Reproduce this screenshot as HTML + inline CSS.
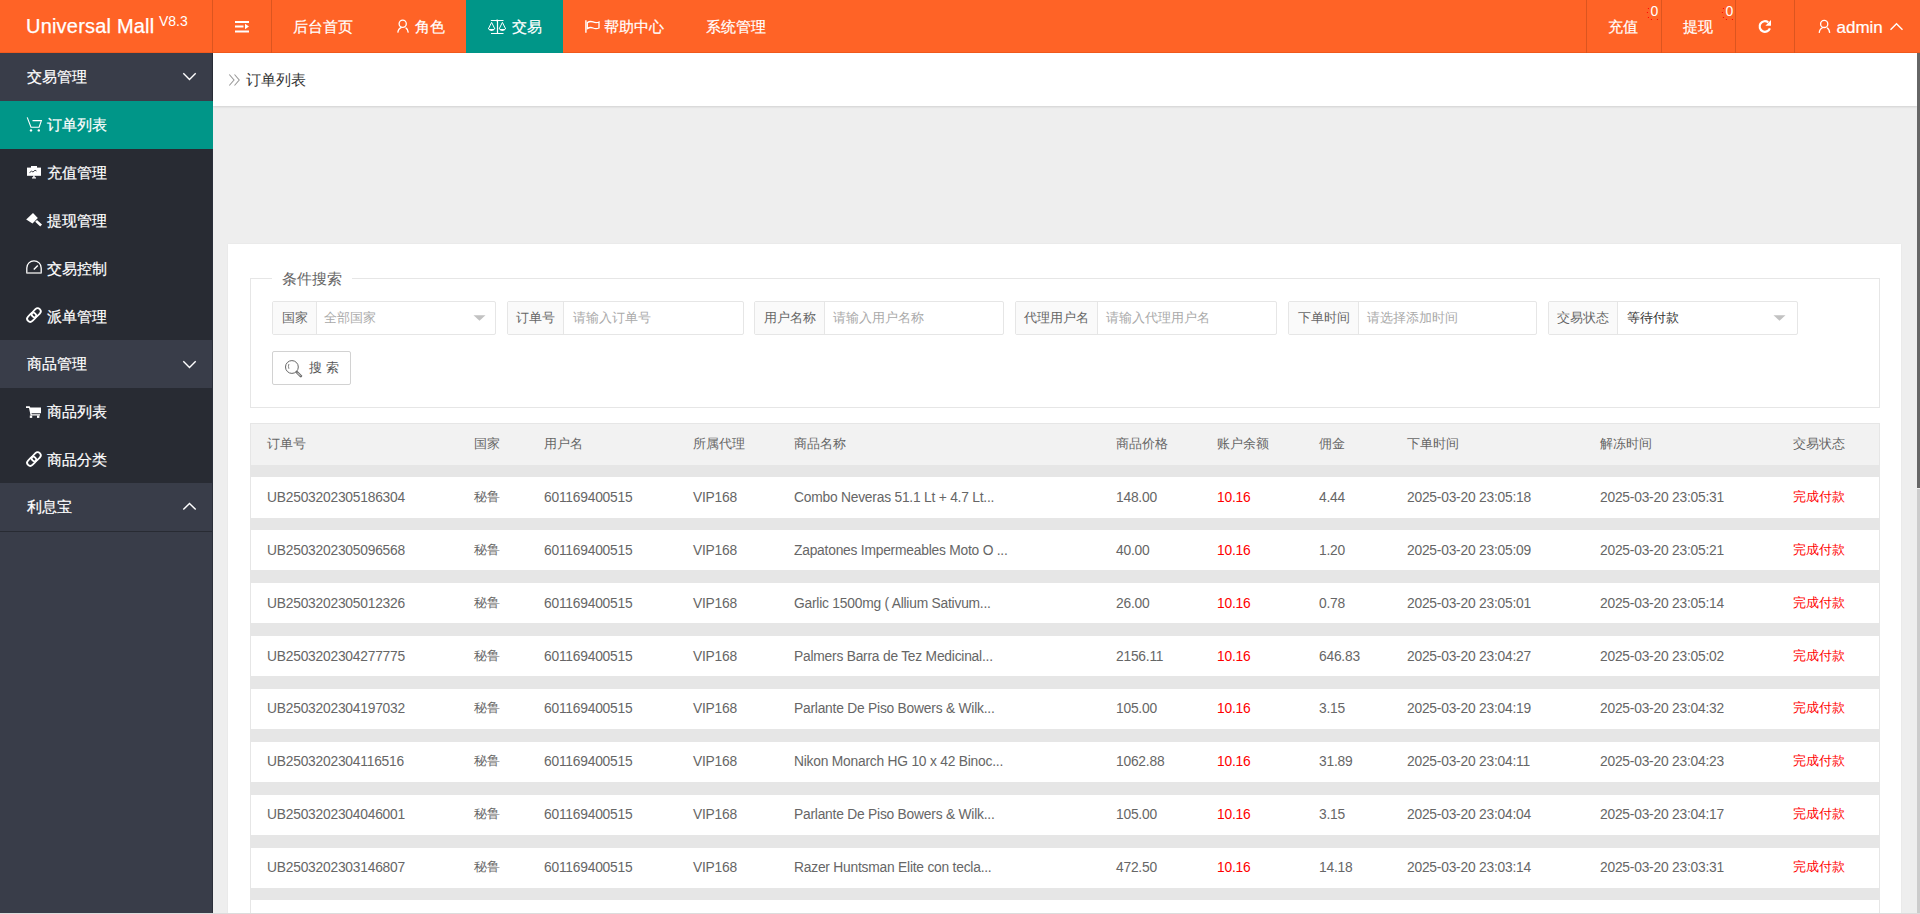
<!DOCTYPE html>
<html><head><meta charset="utf-8">
<style>
*{box-sizing:border-box;margin:0;padding:0}
html,body{width:1920px;height:914px;overflow:hidden;background:#eeeeee;font-family:"Liberation Sans",sans-serif;}
.abs{position:absolute;white-space:nowrap}
#hdr{position:absolute;left:0;top:0;width:1920px;height:53px;background:#ff6326;border-bottom:1px solid #f25a1d}
.sep{position:absolute;top:0;width:1px;height:53px;background:#dc551f}
.hn{position:absolute;top:1px;height:52px;line-height:52px;color:#fff;font-size:15px;-webkit-text-stroke:0.2px #fff}
#side{position:absolute;left:0;top:53px;width:213px;height:861px;background:#393d49;border-right:1px solid #2b2f3a}
.grp{position:absolute;left:0;width:212px;height:48px;background:#393d49}
.kids{position:absolute;left:0;width:212px;background:#282b33}
.st{position:absolute;color:#fff;font-size:15px;line-height:20px;-webkit-text-stroke:0.2px #fff}
#crumb{position:absolute;left:213px;top:53px;width:1704px;height:53px;background:#fff;box-shadow:0 1px 2px rgba(0,0,0,.12)}
#card{position:absolute;left:228px;top:244px;width:1673px;height:680px;background:#fff;box-shadow:0 0 2px rgba(0,0,0,.05)}
.fs{position:absolute;left:250px;top:278px;width:1630px;height:130px;border:1px solid #e6e6e6}
.ig{position:absolute;top:301px;height:34px;border:1px solid #e6e6e6;border-radius:2px;background:#fff}
.ig .lb{position:absolute;left:0;top:0;height:32px;line-height:32px;background:#fafafa;border-right:1px solid #e6e6e6;color:#666;font-size:13px;text-align:center}
.ig .ph{position:absolute;top:0;height:32px;line-height:32px;color:#aaa;font-size:13px}
#tbl{position:absolute;left:250px;top:423px;width:1630px;height:500px;border:1px solid #e6e6e6;border-bottom:none;background:#e6e6e6}
.th{position:absolute;left:251px;top:424px;width:1628px;height:41px;background:#f2f2f2}
.tr{position:absolute;left:251px;width:1628px;height:41px;background:#fff}
.c{position:absolute;font-size:13.8px;letter-spacing:-0.22px;color:#666;white-space:nowrap;line-height:20px}
.cj{font-size:13px;letter-spacing:0}
.red{color:#ff0000}
</style></head><body>
<div id="hdr">
  <div class="abs" style="left:26px;top:13.5px;color:#fff;font-size:20px;line-height:24px;letter-spacing:0.2px;-webkit-text-stroke:0.25px #fff">Universal Mall</div>
  <div class="abs" style="left:159px;top:11px;color:#fff;font-size:14px;line-height:20px">V8.3</div>
  <div class="sep" style="left:212px"></div>
  <div class="sep" style="left:271px"></div>
  <div class="hn" style="left:293px">后台首页</div>
  <div class="hn" style="left:415px">角色</div>
  <div class="abs" style="left:466px;top:0;width:97px;height:53px;background:#009688"></div>
  <div class="hn" style="left:512px">交易</div>
  <div class="hn" style="left:604px">帮助中心</div>
  <div class="hn" style="left:706px">系统管理</div>
  <div class="sep" style="left:1586px"></div>
  <div class="sep" style="left:1661px"></div>
  <div class="sep" style="left:1735px"></div>
  <div class="sep" style="left:1794px"></div>
  <div class="hn" style="left:1608px;top:1px">充值</div>
  <div class="abs" style="left:1650.5px;top:3px;color:#fff;font-size:14px;line-height:16px">0</div>
  <div class="hn" style="left:1683px;top:1px">提现</div>
  <div class="abs" style="left:1725.5px;top:3px;color:#fff;font-size:14px;line-height:16px">0</div>
  <div class="hn" style="left:1836.5px;top:1.5px;font-size:17px">admin</div>
</div>

<div id="side">
  <div class="grp" style="top:0"></div>
  <div class="kids" style="top:48px;height:239px"></div>
  <div class="abs" style="left:0;top:48px;width:213px;height:48px;background:#009688"></div>
  <div class="grp" style="top:287px"></div>
  <div class="kids" style="top:335px;height:95px"></div>
  <div class="grp" style="top:430px;border-bottom:1px solid #282b33;height:49px"></div>
  <div class="st" style="left:27px;top:14px">交易管理</div>
  <div class="st" style="left:47px;top:62px">订单列表</div>
  <div class="st" style="left:47px;top:110px">充值管理</div>
  <div class="st" style="left:47px;top:158px">提现管理</div>
  <div class="st" style="left:47px;top:206px">交易控制</div>
  <div class="st" style="left:47px;top:254px">派单管理</div>
  <div class="st" style="left:27px;top:301px">商品管理</div>
  <div class="st" style="left:47px;top:349px">商品列表</div>
  <div class="st" style="left:47px;top:397px">商品分类</div>
  <div class="st" style="left:27px;top:444px">利息宝</div>
</div>

<div id="crumb">
  <div class="abs" style="left:33px;top:17px;font-size:15px;color:#333;line-height:20px">订单列表</div>
</div>

<div id="card"></div>
<div class="fs"></div>
<div class="abs" style="left:272px;top:269px;padding:0 10px;background:#fff;font-size:15px;color:#666;line-height:20px">条件搜索</div>

<div class="ig" style="left:272px;width:224px"><div class="lb" style="width:44px">国家</div><div class="ph" style="left:51px">全部国家</div></div>
<div class="ig" style="left:507px;width:237px"><div class="lb" style="width:56px">订单号</div><div class="ph" style="left:65px">请输入订单号</div></div>
<div class="ig" style="left:754px;width:250px"><div class="lb" style="width:70px">用户名称</div><div class="ph" style="left:78px">请输入用户名称</div></div>
<div class="ig" style="left:1015px;width:262px"><div class="lb" style="width:82px">代理用户名</div><div class="ph" style="left:90px">请输入代理用户名</div></div>
<div class="ig" style="left:1288px;width:249px"><div class="lb" style="width:70px">下单时间</div><div class="ph" style="left:78px">请选择添加时间</div></div>
<div class="ig" style="left:1548px;width:250px"><div class="lb" style="width:69px">交易状态</div><div class="ph" style="left:78px;color:#333">等待付款</div></div>

<div class="abs" style="left:272px;top:351px;width:79px;height:34px;border:1px solid #d2d2d2;border-radius:2px;background:#fff"></div>
<div class="abs" style="left:309px;top:359px;font-size:13px;color:#555;letter-spacing:4px;line-height:18px">搜索</div>

<div id="tbl"></div>
<div class="th"></div>
<!--ROWS-->
<div class="c cj" style="left:267px;top:434px">订单号</div>
<div class="c cj" style="left:474px;top:434px">国家</div>
<div class="c cj" style="left:544px;top:434px">用户名</div>
<div class="c cj" style="left:693px;top:434px">所属代理</div>
<div class="c cj" style="left:794px;top:434px">商品名称</div>
<div class="c cj" style="left:1116px;top:434px">商品价格</div>
<div class="c cj" style="left:1217px;top:434px">账户余额</div>
<div class="c cj" style="left:1319px;top:434px">佣金</div>
<div class="c cj" style="left:1407px;top:434px">下单时间</div>
<div class="c cj" style="left:1600px;top:434px">解冻时间</div>
<div class="c cj" style="left:1793px;top:434px">交易状态</div>
<div class="tr" style="top:477px;height:41px"></div>
<div class="c" style="left:267px;top:488px">UB2503202305186304</div>
<div class="c cj" style="left:474px;top:487px">秘鲁</div>
<div class="c" style="left:544px;top:488px">601169400515</div>
<div class="c" style="left:693px;top:488px">VIP168</div>
<div class="c" style="left:794px;top:488px">Combo Neveras 51.1 Lt + 4.7 Lt...</div>
<div class="c" style="left:1116px;top:488px">148.00</div>
<div class="c red" style="left:1217px;top:488px">10.16</div>
<div class="c" style="left:1319px;top:488px">4.44</div>
<div class="c" style="left:1407px;top:488px">2025-03-20 23:05:18</div>
<div class="c" style="left:1600px;top:488px">2025-03-20 23:05:31</div>
<div class="c cj red" style="left:1793px;top:487px">完成付款</div>
<div class="tr" style="top:530px;height:40px"></div>
<div class="c" style="left:267px;top:541px">UB2503202305096568</div>
<div class="c cj" style="left:474px;top:540px">秘鲁</div>
<div class="c" style="left:544px;top:541px">601169400515</div>
<div class="c" style="left:693px;top:541px">VIP168</div>
<div class="c" style="left:794px;top:541px">Zapatones Impermeables Moto O ...</div>
<div class="c" style="left:1116px;top:541px">40.00</div>
<div class="c red" style="left:1217px;top:541px">10.16</div>
<div class="c" style="left:1319px;top:541px">1.20</div>
<div class="c" style="left:1407px;top:541px">2025-03-20 23:05:09</div>
<div class="c" style="left:1600px;top:541px">2025-03-20 23:05:21</div>
<div class="c cj red" style="left:1793px;top:540px">完成付款</div>
<div class="tr" style="top:583px;height:40px"></div>
<div class="c" style="left:267px;top:594px">UB2503202305012326</div>
<div class="c cj" style="left:474px;top:593px">秘鲁</div>
<div class="c" style="left:544px;top:594px">601169400515</div>
<div class="c" style="left:693px;top:594px">VIP168</div>
<div class="c" style="left:794px;top:594px">Garlic 1500mg ( Allium Sativum...</div>
<div class="c" style="left:1116px;top:594px">26.00</div>
<div class="c red" style="left:1217px;top:594px">10.16</div>
<div class="c" style="left:1319px;top:594px">0.78</div>
<div class="c" style="left:1407px;top:594px">2025-03-20 23:05:01</div>
<div class="c" style="left:1600px;top:594px">2025-03-20 23:05:14</div>
<div class="c cj red" style="left:1793px;top:593px">完成付款</div>
<div class="tr" style="top:636px;height:40px"></div>
<div class="c" style="left:267px;top:647px">UB2503202304277775</div>
<div class="c cj" style="left:474px;top:646px">秘鲁</div>
<div class="c" style="left:544px;top:647px">601169400515</div>
<div class="c" style="left:693px;top:647px">VIP168</div>
<div class="c" style="left:794px;top:647px">Palmers Barra de Tez Medicinal...</div>
<div class="c" style="left:1116px;top:647px">2156.11</div>
<div class="c red" style="left:1217px;top:647px">10.16</div>
<div class="c" style="left:1319px;top:647px">646.83</div>
<div class="c" style="left:1407px;top:647px">2025-03-20 23:04:27</div>
<div class="c" style="left:1600px;top:647px">2025-03-20 23:05:02</div>
<div class="c cj red" style="left:1793px;top:646px">完成付款</div>
<div class="tr" style="top:689px;height:40px"></div>
<div class="c" style="left:267px;top:699px">UB2503202304197032</div>
<div class="c cj" style="left:474px;top:698px">秘鲁</div>
<div class="c" style="left:544px;top:699px">601169400515</div>
<div class="c" style="left:693px;top:699px">VIP168</div>
<div class="c" style="left:794px;top:699px">Parlante De Piso Bowers &amp; Wilk...</div>
<div class="c" style="left:1116px;top:699px">105.00</div>
<div class="c red" style="left:1217px;top:699px">10.16</div>
<div class="c" style="left:1319px;top:699px">3.15</div>
<div class="c" style="left:1407px;top:699px">2025-03-20 23:04:19</div>
<div class="c" style="left:1600px;top:699px">2025-03-20 23:04:32</div>
<div class="c cj red" style="left:1793px;top:698px">完成付款</div>
<div class="tr" style="top:742px;height:40px"></div>
<div class="c" style="left:267px;top:752px">UB2503202304116516</div>
<div class="c cj" style="left:474px;top:751px">秘鲁</div>
<div class="c" style="left:544px;top:752px">601169400515</div>
<div class="c" style="left:693px;top:752px">VIP168</div>
<div class="c" style="left:794px;top:752px">Nikon Monarch HG 10 x 42 Binoc...</div>
<div class="c" style="left:1116px;top:752px">1062.88</div>
<div class="c red" style="left:1217px;top:752px">10.16</div>
<div class="c" style="left:1319px;top:752px">31.89</div>
<div class="c" style="left:1407px;top:752px">2025-03-20 23:04:11</div>
<div class="c" style="left:1600px;top:752px">2025-03-20 23:04:23</div>
<div class="c cj red" style="left:1793px;top:751px">完成付款</div>
<div class="tr" style="top:795px;height:40px"></div>
<div class="c" style="left:267px;top:805px">UB2503202304046001</div>
<div class="c cj" style="left:474px;top:804px">秘鲁</div>
<div class="c" style="left:544px;top:805px">601169400515</div>
<div class="c" style="left:693px;top:805px">VIP168</div>
<div class="c" style="left:794px;top:805px">Parlante De Piso Bowers &amp; Wilk...</div>
<div class="c" style="left:1116px;top:805px">105.00</div>
<div class="c red" style="left:1217px;top:805px">10.16</div>
<div class="c" style="left:1319px;top:805px">3.15</div>
<div class="c" style="left:1407px;top:805px">2025-03-20 23:04:04</div>
<div class="c" style="left:1600px;top:805px">2025-03-20 23:04:17</div>
<div class="c cj red" style="left:1793px;top:804px">完成付款</div>
<div class="tr" style="top:848px;height:40px"></div>
<div class="c" style="left:267px;top:858px">UB2503202303146807</div>
<div class="c cj" style="left:474px;top:857px">秘鲁</div>
<div class="c" style="left:544px;top:858px">601169400515</div>
<div class="c" style="left:693px;top:858px">VIP168</div>
<div class="c" style="left:794px;top:858px">Razer Huntsman Elite con tecla...</div>
<div class="c" style="left:1116px;top:858px">472.50</div>
<div class="c red" style="left:1217px;top:858px">10.16</div>
<div class="c" style="left:1319px;top:858px">14.18</div>
<div class="c" style="left:1407px;top:858px">2025-03-20 23:03:14</div>
<div class="c" style="left:1600px;top:858px">2025-03-20 23:03:31</div>
<div class="c cj red" style="left:1793px;top:857px">完成付款</div>
<div class="tr" style="top:900px;height:13px"></div>
<!--/ROWS-->
<div class="abs" style="left:1917px;top:53px;width:3px;height:435px;background:#666"></div>
<div class="abs" style="left:1917px;top:489px;width:3px;height:425px;background:#ccc"></div>
<div class="abs" style="left:0;top:913px;width:1920px;height:1px;background:#dcdcdc"></div>
<svg id="icons" style="position:absolute;left:0;top:0;pointer-events:none" width="1920" height="914" viewBox="0 0 1920 914">
<g fill="#fff">
 <rect x="1647.9" y="8.0" width="1" height="1" fill="#f00"/><rect x="1646.9" y="12.0" width="1" height="1" fill="#f00"/><rect x="1647.9" y="17.0" width="1" height="1" fill="#f00"/><rect x="1650.9" y="19.0" width="1" height="1" fill="#f00"/><rect x="1656.9" y="19.0" width="1" height="1" fill="#f00"/><rect x="1722.9" y="8.0" width="1" height="1" fill="#f00"/><rect x="1721.9" y="12.0" width="1" height="1" fill="#f00"/><rect x="1722.9" y="17.0" width="1" height="1" fill="#f00"/><rect x="1725.9" y="19.0" width="1" height="1" fill="#f00"/><rect x="1731.9" y="19.0" width="1" height="1" fill="#f00"/>
 <!-- hamburger -->
 <rect x="235" y="21" width="14" height="2"/>
 <rect x="235" y="25.5" width="8.5" height="2"/>
 <polygon points="245,23.8 249,26.5 245,29.2"/>
 <rect x="235" y="30.5" width="14" height="2"/>
</g>
<g fill="none" stroke="#fff" stroke-width="1.3">
 <!-- role user -->
 <circle cx="402.7" cy="23.7" r="3.6"/>
 <path d="M397.8 32.6 Q398.3 28.3 401.6 27.3"/>
 <path d="M405.6 27.6 Q407.8 28.8 408.3 32.6"/>
 <!-- admin user -->
 <circle cx="1824.2" cy="23.9" r="3.6"/>
 <path d="M1819.2 32.8 Q1819.7 28.5 1823 27.5"/>
 <path d="M1827 27.8 Q1829.2 29 1829.7 32.8"/>
 <!-- scales -->
 <path d="M490.8 20.5 H503.5 M497.5 20.5 V33.3 M491 33.5 H503.5" stroke-width="1.2"/>
 <path d="M491.6 22.4 L488.3 29 M491.6 22.4 L494.9 29 M502.4 22.4 L499.1 29 M502.4 22.4 L505.7 29" stroke-width="1"/>
 <!-- flag -->
 <path d="M585.9 20.3 V32.8" stroke-width="1.4"/>
 <path d="M587.3 22.6 Q590 20.8 593 21.9 Q596 23.2 599 22 V28 Q596 29.3 593 28 Q590 26.8 587.3 28.6 Z" stroke-width="1.3"/>
 <!-- refresh -->
 <path d="M1768.2 22.3 A5.3 5.3 0 1 0 1769.9 28.3" stroke-width="2.2"/>
 <!-- caret up header -->
 <polyline points="1890.5,29.8 1896.5,23.8 1902.5,29.8" stroke-width="1.4"/>
 <!-- sidebar chevrons -->
 <polyline points="183.3,73.2 189.5,79.4 195.7,73.2" stroke-width="1.4"/>
 <polyline points="183.3,361.2 189.5,367.4 195.7,361.2" stroke-width="1.4"/>
 <polyline points="183.3,509.6 189.5,503.4 195.7,509.6" stroke-width="1.4"/>
 <!-- cart outline -->
 <path d="M27.2 117.4 L31 127.3 H39.1 L41.4 120.6 H32.5" stroke-width="1.1"/>
</g>
<g fill="#fff">
 <polygon points="1765.4,25.8 1771,25.8 1771,20"/>
 <path d="M488.3 29 H494.9 Q493.8 31 491.6 31 Q489.4 31 488.3 29 Z"/>
 <path d="M499.1 29 H505.7 Q504.6 31 502.4 31 Q500.2 31 499.1 29 Z"/>
 <circle cx="497.2" cy="20.5" r="1.1"/>
 <circle cx="31" cy="130.4" r="1.2"/>
 <circle cx="38.8" cy="130.4" r="1.2"/>
 <!-- presentation board -->
 <rect x="27" y="167.6" width="14" height="8.2"/>
 <rect x="31" y="166" width="6" height="2"/>
 <rect x="33.2" y="175.5" width="1.5" height="2.3"/>
 <rect x="32" y="177.3" width="4" height="1.2"/>
 <!-- gavel -->
 <polygon points="33,213 37.8,218 32.5,223.6 26.2,219.6"/>
 <polygon points="35.2,221.8 37,220 42,224.6 40.2,226.4"/>
 <!-- solid cart -->
 <path d="M26 406.3 H29.6 L30.3 407.6 H41 V413.3 H31.5 L31.8 414.2 H40 V415.6 H30.6 L29 408 H26 Z"/>
 <rect x="29.8" y="415.5" width="2.4" height="2.4"/>
 <rect x="37" y="415.5" width="2.4" height="2.4"/>
</g>
<g fill="none" stroke="#282b33" stroke-width="0.9">
 <polyline points="29.5,172.6 31.5,171.2 33,172 35,170.2 36.5,171"/>
</g>
<g fill="none" stroke="#fff">
 <!-- gauge -->
 <path d="M26.8 273.2 V268 A7.2 7.2 0 0 1 41.2 268 V273.2" stroke-width="1.3"/>
 <path d="M26.5 273 H41.5" stroke="#ccc" stroke-width="1.6"/>
 <path d="M33.8 269.4 L37.8 265.6" stroke-width="1.4"/>
 <!-- links -->
 <g transform="rotate(-45 34 315)">
  <rect x="25.6" y="311.9" width="10.2" height="6.2" rx="3.1" stroke-width="1.8"/>
  <rect x="32" y="311.9" width="10.2" height="6.2" rx="3.1" stroke-width="1.8"/>
 </g>
 <g transform="rotate(-45 34 459)">
  <rect x="25.6" y="455.9" width="10.2" height="6.2" rx="3.1" stroke-width="1.8"/>
  <rect x="32" y="455.9" width="10.2" height="6.2" rx="3.1" stroke-width="1.8"/>
 </g>
</g>
<!-- breadcrumb >> -->
<g fill="none" stroke="#9a9a9a" stroke-width="1.1">
 <polyline points="229.3,74.5 234,80 229.3,85.5"/>
 <polyline points="234.5,74.5 239.2,80 234.5,85.5"/>
</g>
<!-- search icon -->
<g fill="none" stroke="#666" stroke-width="1">
 <circle cx="291.9" cy="367" r="6.4"/>
 <path d="M288.9 364 Q287.9 366.2 288.9 368.8" stroke-width="0.8"/>
 <path d="M296.8 372.2 L300.8 376.2" stroke-width="2.6" stroke="#6a6a6a" stroke-linecap="round"/><path d="M297.2 372.6 L300.4 375.8" stroke-width="0.9" stroke="#fff"/>
</g>
<!-- select arrows -->
<g fill="#c2c2c2">
 <polygon points="473.5,315.3 485.5,315.3 479.5,320.8"/>
 <polygon points="1773.5,315.3 1785.5,315.3 1779.5,320.8"/>
</g>
</svg>
</body></html>
